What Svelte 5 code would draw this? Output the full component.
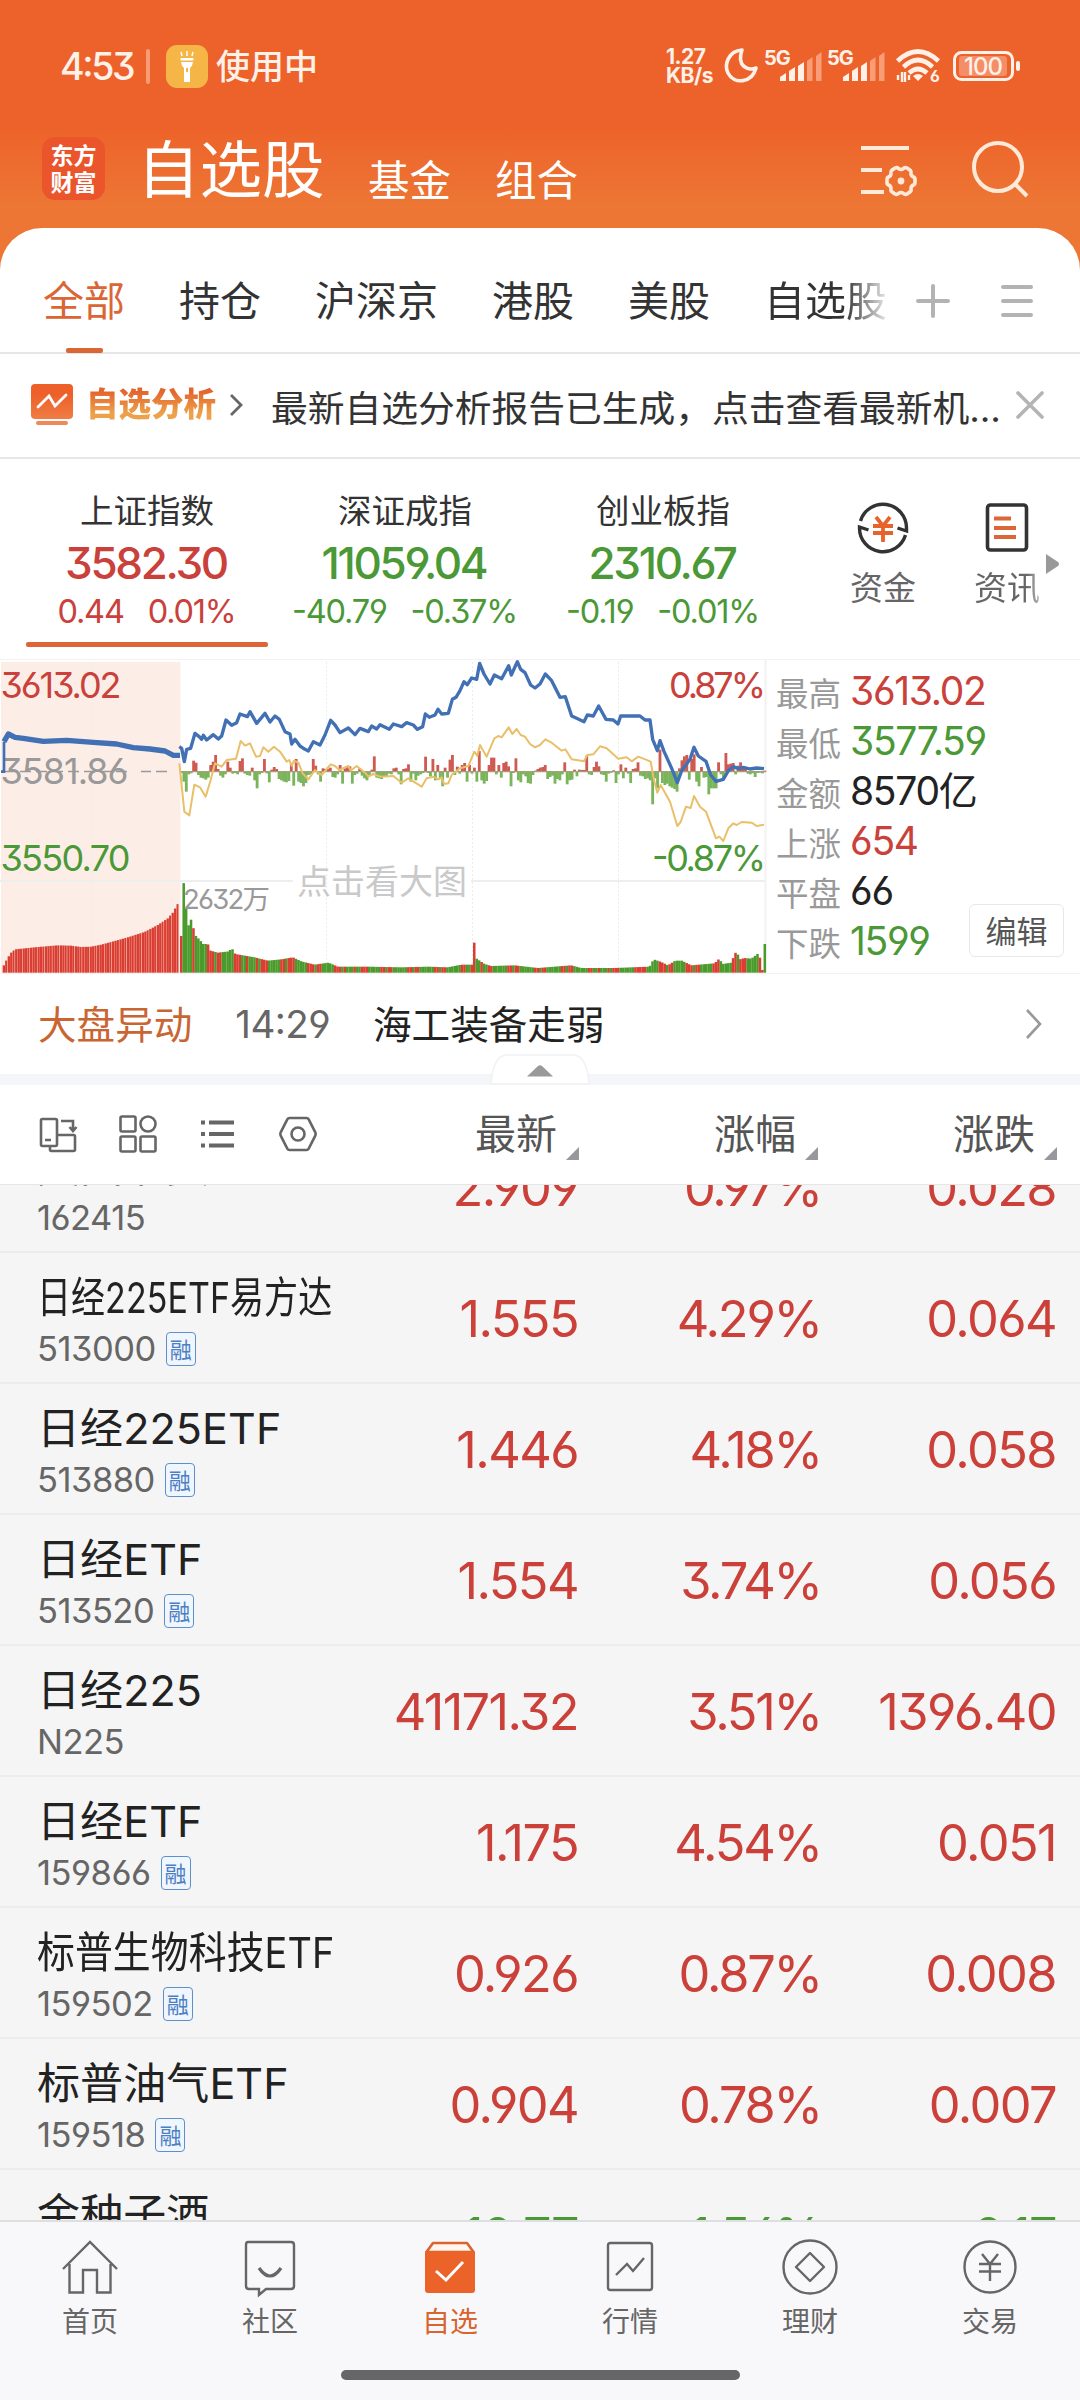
<script lang="ts">
  type Quote = {
    name: string;
    code: string;
    last: string;
    pct: string;
    diff: string;
    margin?: boolean;
    down?: boolean;
    squeeze?: number;
  };

  const tabs = ['全部', '持仓', '沪深京', '港股', '美股', '自选股'];

  const indices = [
    { name: '上证指数', value: '3582.30', diff: '0.44', pct: '0.01%', down: false },
    { name: '深证成指', value: '11059.04', diff: '-40.79', pct: '-0.37%', down: true },
    { name: '创业板指', value: '2310.67', diff: '-0.19', pct: '-0.01%', down: true },
  ];

  const stats = [
    { label: '最高', value: '3613.02', tone: 'up' },
    { label: '最低', value: '3577.59', tone: 'down' },
    { label: '金额', value: '8570亿', tone: '' },
    { label: '上涨', value: '654', tone: 'up' },
    { label: '平盘', value: '66', tone: '' },
    { label: '下跌', value: '1599', tone: 'down' },
  ];

  const quotes: Quote[] = [
    { name: '美国消费LOF', code: '162415', last: '2.909', pct: '0.97%', diff: '0.028' },
    { name: '日经225ETF易方达', code: '513000', last: '1.555', pct: '4.29%', diff: '0.064', margin: true, squeeze: 0.79 },
    { name: '日经225ETF', code: '513880', last: '1.446', pct: '4.18%', diff: '0.058', margin: true },
    { name: '日经ETF', code: '513520', last: '1.554', pct: '3.74%', diff: '0.056', margin: true },
    { name: '日经225', code: 'N225', last: '41171.32', pct: '3.51%', diff: '1396.40' },
    { name: '日经ETF', code: '159866', last: '1.175', pct: '4.54%', diff: '0.051', margin: true },
    { name: '标普生物科技ETF', code: '159502', last: '0.926', pct: '0.87%', diff: '0.008', margin: true, squeeze: 0.88 },
    { name: '标普油气ETF', code: '159518', last: '0.904', pct: '0.78%', diff: '0.007', margin: true },
    { name: '金种子酒', code: '600199', last: '10.77', pct: '-1.56%', diff: '-0.17', down: true },
  ];

  // Chart data is kept on a 2304 x 942 grid, zero line at 335, volume baseline at 938.
  const ZERO = 335;
  const BASE = 938;
  const STEP = 7.325;
  const OPEN_X = 540;

  const auction =
    '12,245 25,222 45,232 70,235 130,244 200,241 280,247 350,252 400,263 450,267 495,273 520,286 540,286';

  const price =
    '538,260 545,265 553,305 560,268 572,265 585,220 600,232 605,238 610,226 620,240 640,224 655,237 665,228 678,180 695,196 710,188 720,162 742,170 750,155 770,190 795,160 810,186 825,168 838,178 855,215 870,222 875,252 885,238 900,258 915,268 925,273 940,245 960,255 975,225 992,181 1005,195 1020,218 1045,204 1065,224 1080,205 1105,215 1115,198 1130,207 1140,194 1168,208 1180,192 1205,200 1220,188 1240,195 1252,208 1268,200 1276,162 1288,172 1305,165 1314,148 1325,162 1345,160 1357,118 1368,112 1380,92 1392,65 1402,74 1415,54 1430,58 1439,10 1452,42 1470,72 1483,45 1505,56 1526,17 1534,45 1552,5 1562,28 1575,38 1592,75 1605,84 1620,72 1636,42 1655,62 1680,112 1696,110 1715,168 1730,175 1752,185 1762,165 1780,168 1796,138 1818,178 1840,180 1854,192 1862,168 1920,168 1935,180 1950,180 1958,238 1972,272 1980,242 1992,274 2015,325 2032,368 2045,332 2070,298 2082,262 2095,288 2118,304 2132,345 2148,364 2170,358 2185,332 2200,320 2215,326 2230,322 2250,327 2270,324 2292,326';

  const average =
    '538,310 553,455 568,466 583,374 600,382 617,410 632,360 645,310 665,320 680,300 708,296 722,243 735,257 750,250 768,290 780,288 790,262 805,275 822,260 840,275 860,305 868,300 875,318 882,302 895,308 908,340 925,358 945,330 965,345 992,313 1005,318 1018,330 1045,318 1052,332 1070,318 1095,338 1105,350 1120,342 1140,350 1180,348 1205,368 1225,355 1265,380 1280,355 1300,350 1315,358 1325,352 1332,372 1345,370 1355,345 1380,325 1405,318 1423,275 1432,288 1440,255 1460,290 1483,235 1495,228 1505,232 1526,202 1537,222 1550,207 1562,225 1575,230 1590,252 1605,262 1620,255 1636,238 1655,248 1685,272 1696,268 1715,298 1752,304 1762,285 1780,283 1800,259 1820,265 1855,296 1880,292 1895,304 1915,290 1945,302 1952,305 1962,360 1972,398 1982,375 2010,425 2032,498 2042,486 2058,440 2072,444 2082,408 2100,440 2118,455 2148,535 2158,530 2170,543 2185,505 2200,490 2210,495 2225,486 2255,488 2270,498 2292,494';

  const flow = [
    -4, -30, -60, -8, -5, 33, 27, -10, -18, -20, -24, -18, 20, 30, 50, 8, -12, -18, -8, 30, 12, -6, -4, -8, 32, 40,
    -6, -10, -12, 12, -26, -50, -8, -4, 38, -5, -32, 6, 14, 8, -22, -26, -30, -32, -28, 25, -42, 38, -30, -34, -44,
    -34, -10, -8, 38, 18, -8, -30, 10, 8, 8, 12, -16, -18, -8, 20, -36, 10, 16, 16, -36, -10, -6, 10, -12, -20, -26,
    -10, 6, 46, -18, -20, -22, -14, -16, -6, -8, 10, 12, -8, -38, 8, 10, 22, -30, -6, -26, -12, -8, -4, 45, -4, -14,
    38, -26, 20, -20, -44, 12, -18, 36, 50, -10, 15, -6, 20, 26, -30, 20, -6, 12, -30, 62, -26, -36, -28, 20, 42, 42,
    -8, 20, -18, 26, 30, 16, -44, -4, 40, -26, -32, -8, -14, -34, -36, -10, 3, 8, 12, 14, 20, -22, -16, -12, -36, -22,
    -26, -8, 28, -38, -26, -24, 6, -14, 6, 5, 5, 48, -8, -10, 14, 30, 16, -8, -10, -30, -6, -3, 4, -34, -8, 22, -20,
    12, -6, -34, 8, 10, 28, -12, -14, -22, -20, -26, -98, -20, -50, 66, -34, -40, -36, -44, -48, -52, -60, 10, 34, 46,
    50, -24, 38, 52, -30, -44, 14, -18, -16, -68, -50, -50, -50, 28, -8, -22, 56, 22, 24, 26, -8, 18, 28, 14, 14, -6,
    -8, -5, -16, -4, -3, -5, 3,
  ];

  const auctionVolume = [
    [8, 22], [20, 45], [30, 60], [42, 70], [100, 76], [170, 82], [210, 81], [240, 77], [270, 78], [300, 84],
    [330, 92], [380, 106], [430, 122], [470, 143], [500, 163], [515, 180], [532, 210], [540, 210],
  ];

  const sessionVolume = [
    [540, 110], [547, 272], [555, 188], [562, 142], [569, 160], [577, 132], [584, 110], [592, 102], [606, 86],
    [620, 86], [628, 66], [650, 60], [684, 64], [691, 75], [702, 56], [760, 46], [800, 36], [840, 40], [875, 46],
    [900, 34], [940, 24], [982, 30], [1010, 18], [1100, 18], [1200, 16], [1280, 18], [1340, 16], [1380, 24],
    [1412, 24], [1419, 90], [1426, 42], [1450, 26], [1470, 20], [1540, 22], [1610, 14], [1710, 22], [1740, 14],
    [1840, 14], [1945, 18], [1957, 40], [1980, 32], [2000, 22], [2022, 36], [2042, 36], [2070, 22], [2140, 28],
    [2154, 42], [2164, 26], [2190, 30], [2198, 50], [2206, 66], [2215, 40], [2230, 44], [2250, 42], [2274, 60],
    [2281, 8], [2284, 8], [2290, 86],
  ];

  function sample(curve: number[][], x: number) {
    const i = curve.findIndex((p) => p[0] >= x);
    if (i === -1) return curve[curve.length - 1][1];
    if (i === 0) return curve[0][1];
    const [x0, y0] = curve[i - 1];
    const [x1, y1] = curve[i];
    return y0 + ((y1 - y0) * (x - x0)) / (x1 - x0);
  }

  const rising = (i: number) => i === 0 || i === 120 || (i > 4 && i !== 239 && Math.sin(i * 1.7) + Math.sin(i * 0.61) > 0.25);

  const openBars = Array.from({ length: 71 }, (_, i) => {
    const x = 8 + i * 7.45;
    return { x, h: sample(auctionVolume, x) };
  });

  const bars = flow.map((_, i) => {
    const x = OPEN_X + i * STEP;
    return { x, h: sample(sessionVolume, x), up: rising(i) };
  });
</script>

{#snippet signal()}
  <svg class="signal" width="58" height="34" viewBox="0 0 58 34">
    <text x="0" y="16" class="tiny">5G</text>
    <path d="M16 32v-4l6-4v8zM25 32V22l6-4v14zM34 32V17l6-4v19z" fill="#fff0e8" />
    <path d="M43 32V12l5.500-4v24zM52 32V7l5.500-4v29z" fill="#f99d76" />
  </svg>
{/snippet}

<div class="screen">
  <header class="top">
    <div class="status">
      <span class="clock">4:53</span>
      <span class="bar"></span>
      <svg width="42" height="43" viewBox="0 0 42 43">
        <rect width="42" height="43" rx="11" fill="#f5b547" />
        <path d="M14.500 13h13v2.500h-13zM15 17h12q-.5 4-3 6v14h-6V23q-2.500-2-3-6z" fill="#fff" />
        <path d="M16 11l-1-4M21 11V6M26 11l1-4" stroke="#fff" stroke-width="1.500" />
        <rect x="20" y="23" width="2" height="4" fill="#f5b547" />
      </svg>
      <span class="using">使用中</span>
      <span class="rate">1.27<br />KB/s</span>
      <svg class="moon" width="34" height="36" viewBox="0 0 34 36">
        <path d="M18 2C4 3 0 17 4 25c6 12 24 10 28-5-7 3-20-1-14-18z" fill="none" stroke="#fff0e8" stroke-width="3.600" stroke-linejoin="round" />
      </svg>
      {@render signal()}
      {@render signal()}
      <svg class="wifi" width="44" height="36" viewBox="0 0 44 36">
        <g fill="none" stroke="#fff0e8" stroke-width="4.600">
          <path d="M1.500 13Q22-6 42.500 13" />
          <path d="M7.500 19Q22 5 36.500 19" />
          <path d="M13 25q9-8 18 0" />
        </g>
        <path d="M17 28q5-4 10 0l-5 5z" fill="#fff0e8" />
        <path d="M2 27v5M6 24v10M9 24v10M13 27v5" stroke="#fff0e8" stroke-width="2.400" />
        <text x="34" y="34" class="tiny six">6</text>
      </svg>
      <svg width="68" height="32" viewBox="0 0 68 32">
        <rect x="1.500" y="2.500" width="58" height="27" rx="7" fill="none" stroke="#fff0e8" stroke-width="3" />
        <rect x="6" y="6" width="48" height="20" rx="3" fill="#f58d66" />
        <rect x="63" y="11" width="4" height="10" rx="2" fill="#fff0e8" />
        <text x="30" y="24.500" class="battery">100</text>
      </svg>
    </div>
    <div class="titlebar">
      <div class="logo">东方<br />财富</div>
      <h1>自选股</h1>
      <span class="link">基金</span>
      <span class="link">组合</span>
      <svg class="filter" width="56" height="52" viewBox="0 0 56 52" fill="none" stroke="#ffe9d8" stroke-width="4">
        <path d="M0 4h48M0 26h21M0 48h23" />
        <path
          d="M34 24q2-1 3.500.5 2.500 2 5 0Q44 23 46 24l3.500 2.500q1 1 .5 3 0 2.500 2.500 3.500 1.500.5 1.500 2.500v3q0 2-1.500 2.500-2.500 1-2.500 3.500.5 2-.5 3L46 50q-2 1-3.500-.5-2.500-2-5 0Q36 51 34 50l-3.500-2.500q-1-1-.5-3 0-2.500-2.500-3.500-1.500-.5-1.500-2.500v-3q0-2 1.500-2.500 2.500-1 2.500-3.500-.5-2 .5-3z"
          stroke-width="3.600"
          stroke-linejoin="round"
        />
        <circle cx="40" cy="37" r="3.400" fill="#ffe9d8" stroke="none" />
      </svg>
      <svg width="56" height="58" viewBox="0 0 56 58" fill="none" stroke="#ffe9d8" stroke-width="4">
        <circle cx="26" cy="27" r="24" />
        <path d="M43 44l12 12" />
      </svg>
    </div>
  </header>

  <main>
    <nav class="tabs">
      {#each tabs as tab, i}
        <span class="tab" class:active={i === 0} class:faded={i === tabs.length - 1}>{tab}</span>
      {/each}
      <svg class="plus" width="34" height="34" viewBox="0 0 34 34"><path d="M17 2v30M2 17h30" /></svg>
      <svg class="burger" width="34" height="34" viewBox="0 0 34 34"><path d="M3 3h28M3 17h28M3 31h28" /></svg>
    </nav>

    <div class="notice">
      <svg width="42" height="42" viewBox="0 0 42 42">
        <defs>
          <linearGradient id="screenFill" x1="0" y1="0" x2="0" y2="1">
            <stop offset="0.300" stop-color="#ee6029" />
            <stop offset="1" stop-color="#ef7d45" />
          </linearGradient>
        </defs>
        <rect width="42" height="35" rx="4" fill="url(#screenFill)" />
        <rect x="5" y="37" width="32" height="4" rx="2" fill="#f0895a" />
        <path d="M7 23l11-11 6 10 11-11" fill="none" stroke="#fff" stroke-width="2.800" stroke-linecap="round" />
      </svg>
      <span class="brand">自选分析</span>
      <svg class="more" width="14" height="24" viewBox="0 0 14 24"><path d="M2 2l10 10L2 22" fill="none" stroke="#666" stroke-width="2.800" /></svg>
      <span class="message">最新自选分析报告已生成，点击查看最新机...</span>
      <svg width="28" height="28" viewBox="0 0 28 28"><path d="M2 2l24 24M26 2L2 26" fill="none" stroke="#b4b4b4" stroke-width="3.600" stroke-linecap="round" /></svg>
    </div>

    <section class="indices">
      {#each indices as item, i}
        <div class="index" class:selected={i === 0}>
          <span class="index-name">{item.name}</span>
          <span class="index-value" class:up={!item.down} class:down={item.down}>{item.value}</span>
          <span class="index-diff" class:up={!item.down} class:down={item.down}>
            <span>{item.diff}</span><span>{item.pct}</span>
          </span>
        </div>
      {/each}
      <div class="tool">
        <svg width="54" height="54" viewBox="0 0 54 54" fill="none" stroke="#333" stroke-width="3.400">
          <path d="M4.500 20A23.500 23.500 0 0 1 50.500 27v3l-9-3M49.500 34A23.500 23.500 0 0 1 3.500 27v-1l9 3" />
          <path d="M20 16l7 9 7-9M17 25h20M17 32h20M27 25v16" stroke="#e8632c" stroke-width="3.800" />
        </svg>
        <span>资金</span>
      </div>
      <div class="tool">
        <svg width="44" height="54" viewBox="0 0 44 54" fill="none">
          <rect x="2.500" y="4" width="39" height="45" rx="3" stroke="#333" stroke-width="3.600" />
          <path d="M9 17.500h17M9 27h22M9 36h22" stroke="#dd6636" stroke-width="4" />
        </svg>
        <span class="clipped">资讯</span>
      </div>
      <svg class="next" width="14" height="20" viewBox="0 0 14 20"><path d="M1 0l12 8q2 2 0 4L1 20z" fill="#999" /></svg>
    </section>

    <section class="market">
      <svg class="chart" width="768" height="315" viewBox="0 0 768 315">
        <rect x="1" y="2" width="179.500" height="311" fill="#fceee7" />
        <g stroke="#ececec" stroke-width="1" stroke-dasharray="2 2">
          <path d="M92.500 2v311M326.500 2v311M472.500 2v311M618.500 2v311" />
        </g>
        <path d="M0 221h293M471 221h295" stroke="#eeeeee" stroke-width="2" />
        <path d="M765.500 0v314" stroke="#f2f2f2" stroke-width="2" />
        <text x="0.500" y="38" class="axis up" textLength="121">3613.02</text>
        <text x="0.500" y="124" class="axis flat" textLength="128">3581.86</text>
        <text x="0.500" y="211" class="axis down" textLength="130">3550.70</text>
        <text x="669" y="38" class="axis up" textLength="97">0.87%</text>
        <text x="652" y="211" class="axis down" textLength="114">-0.87%</text>
        <text x="297" y="234" class="hint">点击看大图</text>
        <path d="M4 111.500h126M141 111.500h10M156 111.500h16" stroke="#999" stroke-width="1.500" stroke-dasharray="11 5" />
        <g transform="scale(0.33333)">
          {#each flow as v, i}
            <rect
              x={OPEN_X + i * STEP}
              y={v > 0 ? ZERO - v : ZERO}
              width="8.500"
              height={Math.abs(v)}
              fill={v > 0 ? '#cf5a52' : '#7bb55b'}
            />
          {/each}
          <path d="M540 335H2298" stroke="#a3a07e" stroke-width="4" />
          {#each openBars as bar, i}
            <rect x={bar.x} y={BASE - bar.h} width={i % 3 === 1 ? 6 : 7} height={bar.h} fill="#da3d31" />
          {/each}
          {#each bars as bar}
            <rect x={bar.x} y={BASE - bar.h} width="7.600" height={bar.h} fill={bar.up ? '#da3d31' : '#4a9a2c'} />
          {/each}
          <polyline points={average} fill="none" stroke="#e9bf69" stroke-width="6" stroke-linejoin="round" />
          <polyline points={price} fill="none" stroke="#4170b4" stroke-width="10" stroke-linejoin="round" />
          <polyline points="3,335 12,335 12,245" fill="none" stroke="#4170b4" stroke-width="8" />
          <polyline points={auction} fill="none" stroke="#4170b4" stroke-width="16" stroke-linejoin="round" />
        </g>
        <text x="183" y="249" class="peak" textLength="87">2632万</text>
      </svg>
      <dl class="stats">
        {#each stats as stat}
          <div class="stat">
            <dt>{stat.label}</dt>
            <dd class={stat.tone}>{stat.value}</dd>
          </div>
        {/each}
      </dl>
      <button class="edit">编辑</button>
    </section>

    <div class="news">
      <span class="news-tag">大盘异动</span>
      <time>14:29</time>
      <span class="news-text">海工装备走弱</span>
      <svg width="18" height="32" viewBox="0 0 18 32"><path d="M2 2l13 14L2 30" fill="none" stroke="#999" stroke-width="2.600" /></svg>
    </div>

    <div class="divider">
      <svg class="handle" width="100" height="31" viewBox="0 0 100 31">
        <path d="M1 30Q3 2 16 1h68q13 1 15 29z" fill="#fff" stroke="#f0f1f4" stroke-width="1.500" />
        <path d="M37 22.500L48 12q2-1.500 4 0l11 10.500z" fill="#999" />
      </svg>
    </div>

    <div class="columns">
      <div class="views">
        <svg width="38" height="38" viewBox="0 0 38 38">
          <path d="M11 31H3.500Q2 31 2 29.500v-24Q2 4 3.500 4h13Q18 4 18 5.500V20M6 25h6M22 6h12v11M30.500 12l3.500 4 3.500-4M18 20h16.500q1.500 0 1.500 1.500v13q0 1.500-1.500 1.500h-22q-1.500 0-1.500-1.500V31h5.500q1.500 0 1.500-1.500V20" />
        </svg>
        <svg width="38" height="38" viewBox="0 0 38 38">
          <rect x="1.500" y="1.500" width="15" height="15" rx="1.500" />
          <circle cx="29" cy="9" r="7.500" />
          <rect x="1.500" y="21.500" width="15" height="15" rx="1.500" />
          <rect x="21.500" y="21.500" width="15" height="15" rx="1.500" />
        </svg>
        <svg class="bold" width="38" height="38" viewBox="0 0 38 38">
          <path d="M2 7.500h4M10 7.500h25M2 19h4M10 19h25M2 30.500h4M10 30.500h25" />
        </svg>
        <svg width="38" height="38" viewBox="0 0 38 38">
          <path d="M10.500 3h17q1.500 0 2.200 1.300l6.600 13q.8 1.700 0 3.400l-6.600 13q-.7 1.300-2.200 1.300h-17q-1.500 0-2.200-1.300l-6.600-13q-.8-1.700 0-3.400l6.600-13q.7-1.300 2.200-1.300z" />
          <circle cx="19" cy="19" r="6.500" />
        </svg>
      </div>
      {#each ['最新', '涨幅', '涨跌'] as column}
        <div class="column">
          <span>{column}</span>
          <svg width="13" height="13" viewBox="0 0 13 13"><path d="M13 0v13H0z" fill="#98989c" /></svg>
        </div>
      {/each}
    </div>

    <ul class="list">
      {#each quotes as quote}
        <li>
          <div class="who">
            <span class="name" style:transform={quote.squeeze ? `scaleX(${quote.squeeze})` : null}>{quote.name}</span>
            <span class="code">{quote.code}{#if quote.margin}<i>融</i>{/if}</span>
          </div>
          <span class="num last" class:falling={quote.down}>{quote.last}</span>
          <span class="num pct" class:falling={quote.down}>{quote.pct}</span>
          <span class="num diff" class:falling={quote.down}>{quote.diff}</span>
        </li>
      {/each}
    </ul>
  </main>

  <footer>
    <div class="dock">
      <div class="item">
        <svg width="56" height="58" viewBox="0 0 56 58">
          <path d="M1 31L28 4l27 27M7.500 26v28.500H21V32h14v22.500h13.500V26" />
        </svg>
        <span>首页</span>
      </div>
      <div class="item">
        <svg width="56" height="58" viewBox="0 0 56 58">
          <path d="M6 4h43q3 0 3 3v41q0 3-3 3H24l-7 6v-6H7q-3 0-3-3V7q0-3 2-3z" />
          <path d="M17 30q11 16 22 0" stroke-width="3.200" />
        </svg>
        <span>社区</span>
      </div>
      <div class="item current">
        <svg width="56" height="58" viewBox="0 0 56 58">
          <path d="M4.500 14L11 5h34l6.500 9z" fill="#fff5ee" stroke-width="2.600" stroke-linejoin="round" />
          <path d="M3 13.500h50V52q0 3-3 3H6q-3 0-3-3z" fill="#ec632a" stroke="none" />
          <path d="M14 33l10 9 17-18" stroke="#fff" stroke-width="3" />
        </svg>
        <span>自选</span>
      </div>
      <div class="item">
        <svg width="56" height="58" viewBox="0 0 56 58">
          <rect x="6" y="5" width="44" height="47" rx="2.500" />
          <path d="M14 37l11-11 6 7 11-13" />
        </svg>
        <span>行情</span>
      </div>
      <div class="item">
        <svg width="56" height="58" viewBox="0 0 56 58">
          <circle cx="28" cy="29" r="26.500" />
          <path d="M28 15l14 14-14 14-14-14z" stroke-linejoin="round" />
        </svg>
        <span>理财</span>
      </div>
      <div class="item">
        <svg width="56" height="58" viewBox="0 0 56 58">
          <circle cx="28" cy="29" r="25.500" />
          <path d="M20 16l8 10 8-10M17 26h22M17 33.500h22M28 26v17" />
        </svg>
        <span>交易</span>
      </div>
    </div>
    <div class="gesture"></div>
  </footer>
</div>

<style>
  :global(body) {
    background: #f5f5f5;
  }
  .screen {
    width: 1080px;
    height: 2400px;
    display: flex;
    flex-direction: column;
    overflow: hidden;
    background: linear-gradient(#ed622a 125px, #ed7634 205px, #ed7634 300px);
    font-family: Inter, 'Noto Sans CJK SC', sans-serif;
    font-feature-settings: 'cv03', 'cv04', 'cv09', 'case';
    color: #222;
    white-space: nowrap;
  }
  .screen svg {
    display: block;
    flex: none;
    overflow: visible;
  }
  .up {
    color: #c9413a;
    fill: #c9413a;
  }
  .down {
    color: #4b9837;
    fill: #4b9837;
  }

  .top {
    height: 228px;
    flex: none;
    color: #fff;
  }
  .status {
    height: 132px;
    display: flex;
    align-items: center;
    padding-left: 60px;
    color: #fff0e8;
    box-sizing: border-box;
  }
  .clock {
    width: 86px;
    font-size: 37.5px;
    font-weight: 500;
    letter-spacing: -2.4px;
  }
  .bar {
    width: 4px;
    height: 35px;
    margin-right: 16px;
    border-radius: 2px;
    background: #f99c75;
  }
  .using {
    margin: -3px 0 0 8px;
    font-size: 34px;
    font-weight: 500;
    width: 450px;
  }
  .rate {
    width: 51px;
    font-size: 21px;
    line-height: 19.5px;
    font-weight: 700;
    letter-spacing: -0.5px;
  }
  .moon {
    margin: 0 6px 0 7px;
  }
  .signal {
    margin-right: 5px;
  }
  .tiny {
    font-size: 20px;
    font-weight: 700;
    fill: #fff0e8;
    letter-spacing: -1px;
  }
  .six {
    font-size: 16px;
  }
  .wifi {
    margin: 0 13px 0 6px;
  }
  .battery {
    font-size: 24px;
    font-weight: 500;
    fill: #fff0e8;
    text-anchor: middle;
    letter-spacing: -1px;
  }
  .titlebar {
    height: 96px;
    display: flex;
    align-items: flex-start;
    padding-left: 42px;
  }
  .logo {
    width: 63px;
    height: 63px;
    margin-top: 5px;
    border-radius: 13px;
    background: #eb552b;
    box-sizing: border-box;
    padding-top: 4px;
    font: 700 23px/27px 'Noto Sans CJK SC', sans-serif;
    text-align: center;
  }
  h1 {
    width: 190px;
    margin: 0 0 0 32px;
    font-size: 62.5px;
    font-weight: 400;
    line-height: 76px;
  }
  .link {
    margin-left: 41px;
    font-size: 41.5px;
    line-height: 98px;
  }
  .link + .link {
    margin-left: 44px;
  }
  .filter {
    margin: 12px 55px 0 283px;
  }
  .filter + svg {
    margin-top: 8px;
  }

  main {
    height: 1992px;
    flex: none;
    background: #fff;
    border-radius: 42px 42px 0 0;
    overflow: hidden;
  }
  .tabs {
    height: 126px;
    box-sizing: border-box;
    border-bottom: 2px solid #e6e6e6;
    display: flex;
    align-items: stretch;
    gap: 54px;
    padding-left: 43px;
    font-size: 41px;
    line-height: 147px;
    color: #333;
  }
  .tab.active {
    color: #da6635;
    display: flex;
    flex-direction: column;
    align-items: center;
    height: 125px;
  }
  .tab.active::after {
    content: '';
    width: 37px;
    height: 5px;
    border-radius: 2px;
    margin-top: -27px;
    background: #da6635;
  }
  .tab.faded {
    width: 124px;
    color: transparent;
    background: linear-gradient(90deg, #333 65%, #eee 100%);
    background-clip: text;
  }
  .plus,
  .burger {
    margin: 56px 0 0 -26px;
    fill: none;
    stroke: #b3b3b3;
    stroke-width: 4;
    stroke-linecap: round;
  }
  .burger {
    margin-left: -4px;
  }
  .notice {
    height: 105px;
    box-sizing: border-box;
    border-bottom: 2px solid #e6e6e6;
    display: flex;
    align-items: center;
    padding: 0 0 2px 31px;
  }
  .brand {
    margin: -6px 0 0 13px;
    width: 143px;
    font-size: 32.5px;
    font-weight: 900;
    color: transparent;
    background: linear-gradient(#e2672f 30%, #eda14a 75%);
    background-clip: text;
  }
  .message {
    margin: 2px 17px 0 28px;
    width: 728px;
    font-size: 36.8px;
    letter-spacing: -0.05px;
    color: #333;
  }

  .indices {
    height: 200px;
    display: flex;
    padding-left: 18px;
  }
  .index {
    width: 258px;
    height: 189px;
    display: flex;
    flex-direction: column;
    align-items: center;
  }
  .index.selected::after {
    content: '';
    width: 242px;
    height: 5px;
    margin-top: 11px;
    border-radius: 2px;
    background: #dd6636;
  }
  .index-name {
    margin-top: 27px;
    font-size: 33.5px;
    line-height: 50px;
    color: #333;
  }
  .index-value {
    margin: -1px 2px 0 0;
    font-size: 44px;
    font-weight: 500;
    line-height: 56px;
    letter-spacing: -2.3px;
  }
  .index-diff {
    display: flex;
    gap: 24px;
    margin: 0 1px -1px 0;
    font-size: 32.5px;
    line-height: 41px;
    letter-spacing: -1.2px;
  }
  .tool {
    width: 124px;
    display: flex;
    flex-direction: column;
    align-items: center;
    margin-top: 42px;
    font-size: 33px;
    line-height: 67px;
    color: #666;
  }
  .indices .tool:nth-of-type(4) {
    margin-left: 29px;
  }
  .clipped {
    color: transparent;
    background: linear-gradient(90deg, #666 80%, #bbb);
    background-clip: text;
  }
  .next {
    margin: 95px 0 0 -24px;
  }

  .market {
    height: 315px;
    display: flex;
    position: relative;
    border-top: 1px solid #f2f2f2;
    border-bottom: 1px solid #f2f2f2;
    box-sizing: border-box;
  }
  .axis {
    font-size: 36px;
  }
  .flat {
    fill: #999;
  }
  .hint {
    font-size: 34px;
    fill: #c9c9c9;
  }
  .peak {
    font-size: 27.5px;
    fill: #999;
  }
  .stats {
    margin: 6px 0 0 8px;
  }
  .stat {
    height: 50px;
    display: flex;
    align-items: center;
    gap: 9px;
  }
  dt {
    font-size: 32.5px;
    color: #999;
  }
  dd {
    margin: 0;
    font-size: 39px;
    line-height: 50px;
    letter-spacing: -1.3px;
  }
  .edit {
    position: absolute;
    right: 16px;
    bottom: 16px;
    width: 95px;
    height: 53px;
    padding: 0 0 2px;
    border: 1.5px solid #e8e8e8;
    border-radius: 6px;
    background: #fff;
    color: #555;
    font: 31px 'Noto Sans CJK SC', sans-serif;
  }

  .news {
    height: 100px;
    display: flex;
    align-items: center;
    padding: 0 37px 0 38px;
    font-size: 38.6px;
  }
  .news-tag {
    color: #c96532;
    margin-top: -4px;
  }
  .news time {
    margin: 0 43px 0 43px;
    color: #666;
    letter-spacing: -0.6px;
  }
  .news-text {
    flex: 1;
    margin-top: -4px;
  }
  .divider {
    height: 11px;
    background: #f5f6f9;
    position: relative;
  }
  .handle {
    position: absolute;
    left: 490px;
    top: -20px;
  }

  .columns {
    height: 100px;
    box-sizing: border-box;
    border-bottom: 1px solid #e6e6e6;
    display: flex;
    align-items: center;
  }
  .views {
    width: 341px;
    padding-left: 39px;
    display: flex;
    gap: 42px;
    margin-top: -2px;
    fill: none;
    stroke: #666;
    stroke-width: 2.6;
  }
  .views .bold {
    stroke-width: 3.8;
  }
  .column {
    width: 239px;
    display: flex;
    justify-content: flex-end;
    align-items: flex-end;
    gap: 9px;
    margin-top: -2px;
    font-size: 41px;
    line-height: 60px;
    color: #555;
  }
  .column:nth-of-type(2) {
    width: 199px;
  }
  .column svg {
    margin-bottom: 4px;
  }

  .list {
    height: 1035px;
    margin: 0;
    padding: 0;
    list-style: none;
    display: flex;
    flex-direction: column;
    justify-content: flex-start;
    overflow: hidden;
    background: #f5f5f5;
  }
  li {
    height: 131px;
    flex: none;
    box-sizing: border-box;
    border-bottom: 2px solid #ececec;
    display: flex;
    align-items: center;
    padding-top: 6px;
  }
  li:first-child {
    margin-top: -63px;
  }
  .who {
    width: 341px;
    padding-left: 37px;
    display: flex;
    flex-direction: column;
    align-items: flex-start;
  }
  .name {
    font-size: 43px;
    line-height: 56px;
    letter-spacing: 0.1px;
    transform-origin: left;
  }
  .code {
    display: flex;
    align-items: center;
    font-size: 34.5px;
    line-height: 48px;
    letter-spacing: -0.5px;
    color: #666;
  }
  .code i {
    width: 30px;
    height: 34px;
    margin-left: 10px;
    box-sizing: border-box;
    border: 1.5px solid #5e8fcb;
    border-radius: 4px;
    background: #f0f6fd;
    color: #4b7fc4;
    font: 22px/31px 'Noto Sans CJK SC', sans-serif;
    letter-spacing: 0;
    text-align: center;
  }
  .num {
    margin-top: -5px;
    text-align: right;
    font-size: 50.5px;
    letter-spacing: -1.6px;
    color: #cb413a;
  }
  .last {
    width: 200px;
  }
  .pct {
    width: 243px;
    letter-spacing: -2.2px;
  }
  .diff {
    width: 235px;
  }
  .falling {
    color: #4b9837;
  }

  footer {
    height: 180px;
    box-sizing: border-box;
    border-top: 2px solid #dedfe1;
    background: #f8f8fa;
    display: flex;
    flex-direction: column;
    align-items: center;
  }
  .dock {
    width: 1080px;
    display: flex;
    height: 148px;
  }
  .item {
    width: 180px;
    padding-top: 16px;
    display: flex;
    flex-direction: column;
    align-items: center;
    font-size: 28px;
    line-height: 53px;
    color: #666;
    fill: none;
    stroke: #666;
    stroke-width: 2.4;
  }
  .current {
    color: #d8642f;
    stroke: #d8642f;
  }
  .gesture {
    width: 399px;
    height: 10px;
    border-radius: 5px;
    background: #666;
  }
</style>
